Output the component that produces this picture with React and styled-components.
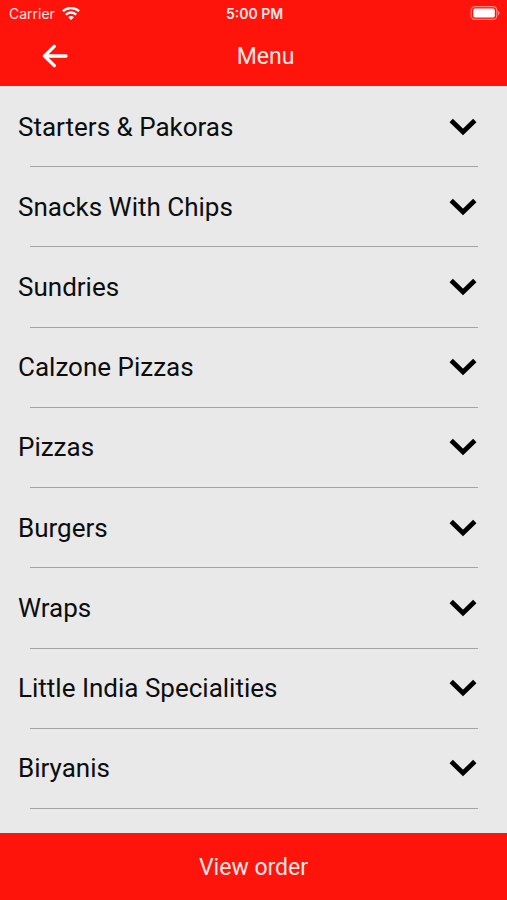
import React from "react";
import styled, { createGlobalStyle } from "styled-components";

const GlobalStyle = createGlobalStyle`
  *, *::before, *::after { box-sizing: border-box; }
  body { margin: 0; background: #e9e9e9; }
  button { margin: 0; padding: 0; border: 0; background: none; font: inherit; color: inherit; cursor: pointer; }
`;

const Screen = styled.div`
  min-height: 100vh;
  display: flex;
  flex-direction: column;
  background: #e9e9e9;
  color: #0d0d0d;
  font-family: Roboto, "Liberation Sans", sans-serif;
`;

const TopBar = styled.header`
  background: #ff140c;
  color: #ffe9e7;
`;

const StatusBar = styled.div`
  display: grid;
  grid-template-columns: 1fr auto 1fr;
  align-items: center;
  height: 28px;
  padding: 0 7px 0 9px;
  font-family: Inter, "Liberation Sans", sans-serif;
  font-size: 14px;
  line-height: 16px;
`;

const Carrier = styled.span`
  display: flex;
  align-items: center;
  gap: 7px;
`;

const Clock = styled.time`
  font-weight: 600;
`;

const BatterySlot = styled.span`
  display: flex;
  justify-content: flex-end;
  padding-bottom: 2px;
`;

const NavBar = styled.div`
  display: grid;
  grid-template-columns: 1fr auto 1fr;
  align-items: center;
  height: 58px;
  padding: 0 18px 2px 42px;
`;

const BackButton = styled.button`
  && {
    display: flex;
    justify-self: start;
    color: #fff;
  }
`;

const Title = styled.h1`
  margin: 0;
  padding-top: 2px;
  font-size: 23px;
  line-height: 28px;
  font-weight: 400;
`;

const CategoryList = styled.ul`
  flex: 1;
  display: flex;
  flex-direction: column;
  margin: 0;
  padding: 1px 29px 24px 18px;
  list-style: none;
`;

const CategoryItem = styled.li`
  flex: 1;
  display: flex;
  flex-direction: column;
  min-height: 64px;
`;

const CategoryButton = styled.button`
  && {
    flex: 1;
    display: flex;
    align-items: center;
    justify-content: space-between;
    width: 100%;
    padding-right: 1px;
    font-size: 26px;
    line-height: 32px;
    text-align: left;
  }
`;

const Divider = styled.hr`
  align-self: stretch;
  height: 1px;
  margin: 0 0 0 12px;
  border: 0;
  background: #a3a3a3;
`;

const OrderButton = styled.button`
  && {
    height: 67px;
    padding-top: 2px;
    background: #ff140c;
    color: #ffe9e7;
    font-size: 23px;
    line-height: 28px;
  }
`;

const WifiIcon = () => (
  <svg width="18" height="14" viewBox="0 0 18 14" fill="none" stroke="#fff" strokeWidth="2.4" aria-hidden="true">
    <path d="M0.9 4.2C5.4 -0.1 12.6 -0.1 17.1 4.2" />
    <path d="M3.8 7.6C6.8 4.7 11.2 4.7 14.2 7.6" />
    <path d="M9 13L6.1 10.2C7.9 8.7 10.1 8.7 11.9 10.2Z" fill="#fff" stroke="none" />
  </svg>
);

const BatteryIcon = () => (
  <svg width="30" height="14" viewBox="0 0 30 14" role="img" aria-label="Battery full">
    <rect x="1.2" y="0.7" width="25.6" height="12.6" rx="3.6" fill="none" stroke="#ff8a85" strokeWidth="1.2" />
    <rect x="3.2" y="2.6" width="21.6" height="8.8" rx="1.6" fill="#fff" />
    <path d="M28 4.8C30 5.6 30 8.4 28 9.2Z" fill="#ff8a85" />
  </svg>
);

const BackIcon = () => (
  <svg width="26" height="24" viewBox="0 0 26 24" fill="none" stroke="currentColor" strokeWidth="3.4" strokeLinecap="round" strokeLinejoin="round" aria-hidden="true">
    <path d="M12.3 2.4L2.5 12L12.3 21.6M3 12H24" />
  </svg>
);

const ChevronIcon = () => (
  <svg width="28" height="18" viewBox="0 0 28 18" fill="none" stroke="#000" strokeWidth="4.8" aria-hidden="true">
    <path d="M2.2 2.6L14 14L25.8 2.6" />
  </svg>
);

const categories = [
  "Starters & Pakoras",
  "Snacks With Chips",
  "Sundries",
  "Calzone Pizzas",
  "Pizzas",
  "Burgers",
  "Wraps",
  "Little India Specialities",
  "Biryanis",
];

export default function App() {
  return (
    <>
      <GlobalStyle />
      <Screen>
        <TopBar>
          <StatusBar>
            <Carrier>
              Carrier
              <WifiIcon />
            </Carrier>
            <Clock dateTime="17:00">5:00 PM</Clock>
            <BatterySlot>
              <BatteryIcon />
            </BatterySlot>
          </StatusBar>
          <NavBar>
            <BackButton type="button" aria-label="Back">
              <BackIcon />
            </BackButton>
            <Title>Menu</Title>
          </NavBar>
        </TopBar>
        <CategoryList>
          {categories.map((name) => (
            <CategoryItem key={name}>
              <CategoryButton type="button" aria-expanded="false">
                {name}
                <ChevronIcon />
              </CategoryButton>
              <Divider />
            </CategoryItem>
          ))}
        </CategoryList>
        <OrderButton type="button">View order</OrderButton>
      </Screen>
    </>
  );
}
